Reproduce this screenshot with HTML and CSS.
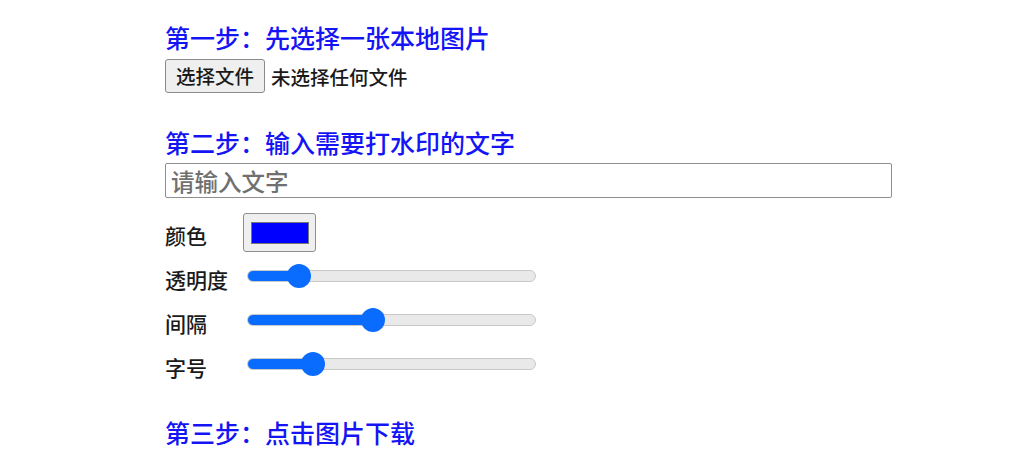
FILE: index.html
```html
<!DOCTYPE html>
<html lang="zh-CN">
<head>
	<meta charset="UTF-8">
	<title>图片加水印</title>
	<link rel="stylesheet" href="styles.css">
</head>
<body>
	<div class="wrap">
		<h3 class="step step-first">第一步：先选择一张本地图片</h3>
		<div class="file-row">
			<button class="file-btn" type="button">选择文件</button>
			<span class="file-name">未选择任何文件</span>
		</div>

		<h3 class="step step-second">第二步：输入需要打水印的文字</h3>
		<input class="text-input" type="text" placeholder="请输入文字">

		<div class="row row-color">
			<span class="label">颜色</span>
			<span class="color-box"><span class="swatch"></span></span>
		</div>
		<div class="row">
			<span class="label">透明度</span>
			<input class="range" type="range" min="0" max="100" value="15" style="--fill:17.8%">
		</div>
		<div class="row">
			<span class="label">间隔</span>
			<input class="range" type="range" min="0" max="100" value="43" style="--fill:44%">
		</div>
		<div class="row">
			<span class="label">字号</span>
			<input class="range" type="range" min="0" max="100" value="20" style="--fill:22.7%">
		</div>

		<h3 class="step step-third">第三步：点击图片下载</h3>
	</div>
</body>
</html>
```

FILE: styles.css
```css
*{
	margin: 0;
	padding: 0;
	box-sizing: border-box;
}
body{
	font-family: "Noto Sans CJK SC", "Noto Sans", sans-serif;
	font-weight: 500;
	color: #1a1a1a;
	background: #fff;
}
	.wrap{
		padding: 19px 0 0 165px;
	}
	.step{
		font-size: 25px;
		font-weight: 500;
		line-height: 36px;
		color: #1414f5;
	}
	.step-second{
		margin-top: 31px;
	}
	.step-third{
		margin-top: 28px;
	}

	.file-row{
		display: flex;
		align-items: center;
		margin-top: 4px;
	}
	.file-btn{
		width: 100px;
		height: 34px;
		font-family: inherit;
		font-weight: 500;
		font-size: 19.5px;
		line-height: 1;
		color: #1a1a1a;
		background: #efefef;
		border: 1px solid #8a8a8a;
		border-radius: 3px;
	}
	.file-name{
		margin-left: 6px;
		font-size: 19.5px;
	}

	.text-input{
		display: block;
		width: 727px;
		height: 35px;
		margin-top: 3px;
		padding: 0 5px;
		font-family: inherit;
		font-weight: 500;
		font-size: 23.5px;
		border: 1px solid #8f8f8f;
		border-radius: 2px;
		outline: none;
	}
	.text-input::placeholder{
		color: #707070;
	}

	.row{
		display: flex;
		align-items: center;
		height: 44px;
	}
	.row-color{
		height: 39px;
		margin: 15px 0 2px;
	}
	.label{
		width: 78px;
		padding-top: 5px;
		font-size: 21px;
	}
	.color-box{
		display: flex;
		align-items: center;
		justify-content: center;
		width: 73px;
		height: 39px;
		background: #efefef;
		border: 1px solid #8f8f8f;
		border-radius: 3px;
	}
	.swatch{
		width: 58px;
		height: 22px;
		background: #0000ff;
		border: 1px solid #777;
	}

	.range{
		-webkit-appearance: none;
		appearance: none;
		width: 289px;
		height: 24px;
		margin-left: 4px;
		background: transparent;
	}
	.range::-webkit-slider-runnable-track{
		height: 12px;
		border: 1px solid #c9c9c9;
		border-radius: 6px;
		background: linear-gradient(to right, #0a6cff var(--fill), #e9e9e9 var(--fill));
	}
	.range::-webkit-slider-thumb{
		-webkit-appearance: none;
		width: 24px;
		height: 24px;
		margin-top: -7px;
		border: none;
		border-radius: 50%;
		background: #0a6cff;
	}
```
